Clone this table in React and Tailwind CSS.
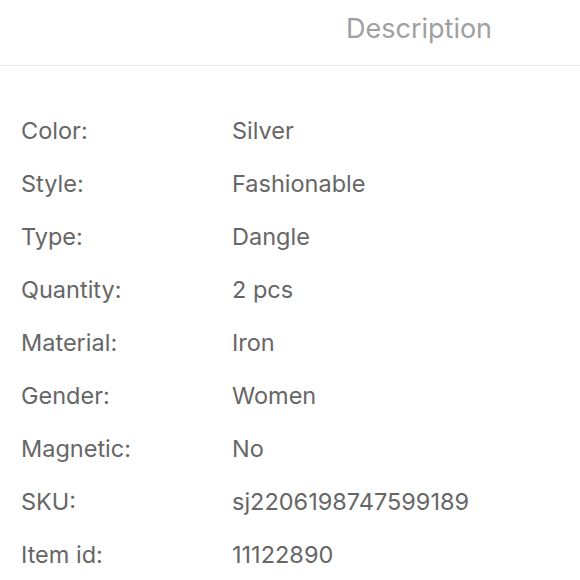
const rows = [
  ["Color:", "Silver"],
  ["Style:", "Fashionable"],
  ["Type:", "Dangle"],
  ["Quantity:", "2 pcs"],
  ["Material:", "Iron"],
  ["Gender:", "Women"],
  ["Magnetic:", "No"],
  ["SKU:", "sj2206198747599189"],
  ["Item id:", "11122890"],
];

export default function App() {
  return (
    <div className="w-[580px] h-[580px] overflow-hidden bg-white font-['Inter',sans-serif]">
      <div className="h-[66px] border-b border-[#ebebeb] pt-[14px] pl-[346px]">
        <span className="text-[27px] leading-[30px] text-[#a0a0a0]">Description</span>
      </div>
      <div className="pt-[38px] pl-[21px]">
        {rows.map(([label, value]) => (
          <div key={label} className="flex h-[53px] items-center text-[23.5px] text-[#666666]">
            <span className="w-[211px] shrink-0">{label}</span>
            <span>{value}</span>
          </div>
        ))}
      </div>
    </div>
  );
}
